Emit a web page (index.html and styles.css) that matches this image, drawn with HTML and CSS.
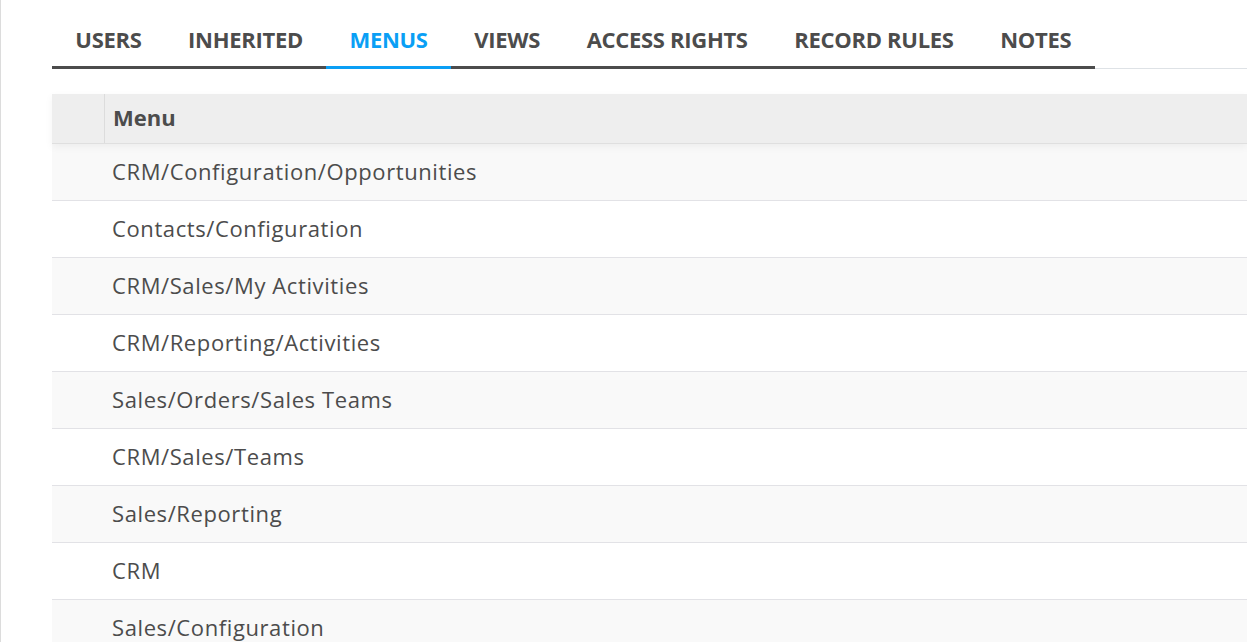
FILE: index.html
```html
<!DOCTYPE html>
<html>
<head>
<meta charset="utf-8">
<link rel="stylesheet" href="styles.css">
</head>
<body>
<div class="sheet">
  <ul class="tabs">
    <li class="tab">USERS</li>
    <li class="tab">INHERITED</li>
    <li class="tab active">MENUS</li>
    <li class="tab">VIEWS</li>
    <li class="tab">ACCESS RIGHTS</li>
    <li class="tab">RECORD RULES</li>
    <li class="tab">NOTES</li>
  </ul>
  <div class="list">
    <div class="head">
      <div class="sel"></div>
      <div class="col">Menu</div>
    </div>
    <div class="row"><div class="sel"></div><div class="cell">CRM/Configuration/Opportunities</div></div>
    <div class="row"><div class="sel"></div><div class="cell">Contacts/Configuration</div></div>
    <div class="row"><div class="sel"></div><div class="cell">CRM/Sales/My Activities</div></div>
    <div class="row"><div class="sel"></div><div class="cell">CRM/Reporting/Activities</div></div>
    <div class="row"><div class="sel"></div><div class="cell">Sales/Orders/Sales Teams</div></div>
    <div class="row"><div class="sel"></div><div class="cell">CRM/Sales/Teams</div></div>
    <div class="row"><div class="sel"></div><div class="cell">Sales/Reporting</div></div>
    <div class="row"><div class="sel"></div><div class="cell">CRM</div></div>
    <div class="row"><div class="sel"></div><div class="cell">Sales/Configuration</div></div>
  </div>
</div>
</body>
</html>
```
FILE: styles.css
```css
html, body {
  margin: 0;
  padding: 0;
  background: #fff;
  overflow: hidden;
}
body {
  font-family: "Open Sans", "Noto Sans", sans-serif;
  color: #4c4c4c;
}
.sheet {
  border-left: 1px solid #dcdcdc;
  padding-left: 51px;
  height: 642px;
  box-sizing: border-box;
}
.tabs {
  list-style: none;
  margin: 0;
  padding: 0;
  display: flex;
  border-bottom: 1px solid #dee2e6;
  height: 68px;
  align-items: flex-end;
}
.tab {
  font-size: 22px;
  font-weight: 700;
  line-height: 30px;
  padding: 23px 23.3px 12px;
  border-bottom: 3px solid #4c4c4c;
  margin-bottom: -1px;
  letter-spacing: -0.3px;
}
.tab.active {
  color: #0a9ff5;
  border-bottom-color: #0a9ff5;
}
.list {
  margin-top: 25px;
  font-size: 22px;
  letter-spacing: 0.6px;
}
.head {
  display: flex;
  height: 50px;
  background: #eeeeee;
  border-bottom: 1px solid #dfdfdf;
  box-sizing: border-box;
  position: relative;
  z-index: 1;
  box-shadow: 0 3px 8px rgba(0, 0, 0, 0.05);
}
.head .sel {
  width: 52px;
  border-right: 1px solid #dcdcdc;
}
.col {
  font-weight: 700;
  padding-left: 8px;
  padding-bottom: 4px;
  display: flex;
  align-items: center;
  letter-spacing: 0;
}
.row {
  display: flex;
  height: 57px;
  border-bottom: 1px solid #e2e2e6;
  box-sizing: border-box;
}
.row:nth-child(even) {
  background: #f9f9f9;
}
.row .sel {
  width: 53px;
}
.cell {
  padding-left: 7px;
  padding-bottom: 2px;
  display: flex;
  align-items: center;
}
```
